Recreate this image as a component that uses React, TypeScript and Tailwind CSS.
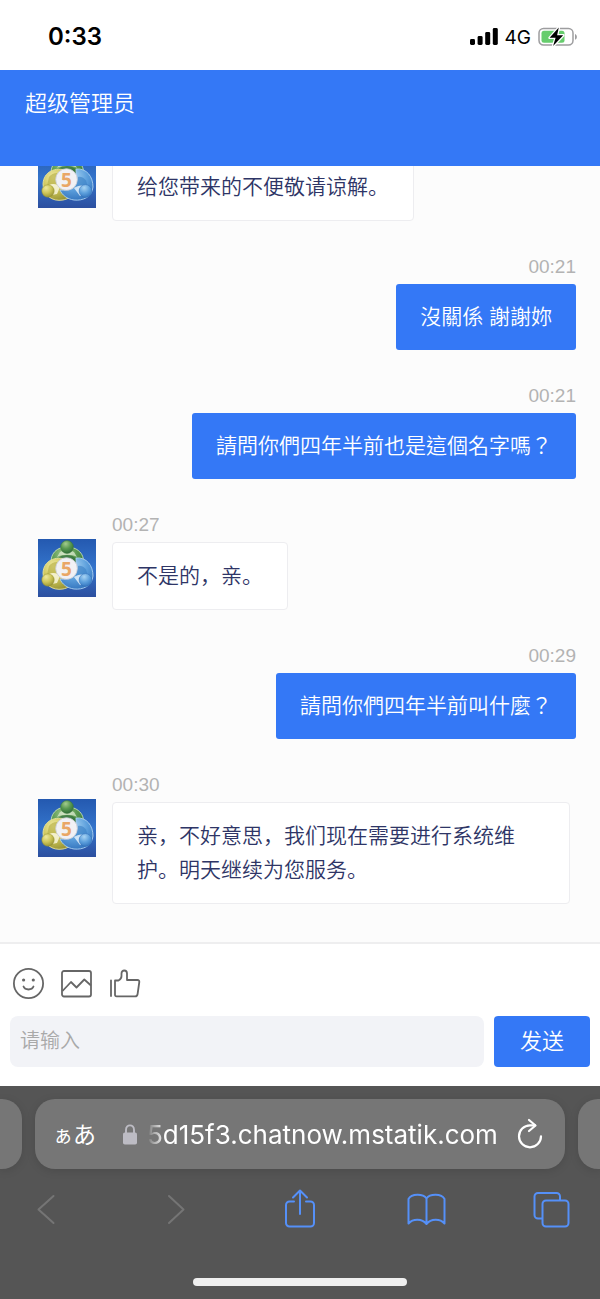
import React from "react";

type ChatMessage = {
  id: number;
  side: "in" | "out";
  time?: string;
  text: string;
};

const messages: ChatMessage[] = [
  { id: 1, side: "in", text: "给您带来的不便敬请谅解。" },
  { id: 2, side: "out", time: "00:21", text: "沒關係 謝謝妳" },
  { id: 3, side: "out", time: "00:21", text: "請問你們四年半前也是這個名字嗎？" },
  { id: 4, side: "in", time: "00:27", text: "不是的，亲。" },
  { id: 5, side: "out", time: "00:29", text: "請問你們四年半前叫什麼？" },
  { id: 6, side: "in", time: "00:30", text: "亲，不好意思，我们现在需要进行系统维护。明天继续为您服务。" },
];

function Avatar({ id }: { id: string }) {
  const bg = `bg-${id}`;
  const green = `green-${id}`;
  const yellow = `yellow-${id}`;
  const blue = `blue-${id}`;
  return (
    <svg viewBox="0 0 58 58" className="mt-[26px] size-[58px] shrink-0" aria-hidden="true">
      <defs>
        <linearGradient id={bg} x1="0" y1="0" x2="0" y2="1">
          <stop offset="0" stopColor="#2459b0" />
          <stop offset="0.5" stopColor="#3474cb" />
          <stop offset="1" stopColor="#2c4f9f" />
        </linearGradient>
        <radialGradient id={green} cx="0.4" cy="0.25" r="0.8">
          <stop offset="0" stopColor="#a3cb8d" />
          <stop offset="0.5" stopColor="#58984f" />
          <stop offset="1" stopColor="#2c6a38" />
        </radialGradient>
        <radialGradient id={yellow} cx="0.35" cy="0.25" r="0.85">
          <stop offset="0" stopColor="#efe99f" />
          <stop offset="0.5" stopColor="#cdc558" />
          <stop offset="1" stopColor="#8f8c30" />
        </radialGradient>
        <radialGradient id={blue} cx="0.4" cy="0.25" r="0.85">
          <stop offset="0" stopColor="#a9d4f3" />
          <stop offset="0.5" stopColor="#5c9fdc" />
          <stop offset="1" stopColor="#2c6cb8" />
        </radialGradient>
      </defs>
      <rect width="58" height="58" fill={`url(#${bg})`} />
      <path d="M14.500 30C10 17 17 8 29 8s20 9 15 22l-8 5H21z" fill={`url(#${green})`} stroke="#c6dfb5" strokeWidth="0.9" />
      <path d="M22 13c4-2.500 10-2.500 14 0l3 5c-5-3-15-3-20 0z" fill="#dcead2" opacity="0.75" />
      <path d="M19 28c-2-9 3-12 10-12s12 4 10 12z" fill="#2f6d3a" opacity="0.75" />
      <path d="M30 21C17 16 5.500 22 5 34c0 11 9 18 20 16 5-1 8-3 9-7z" fill={`url(#${yellow})`} stroke="#e9e39b" strokeWidth="0.9" />
      <path d="M11 27c3-4 8-5 13-3l-4 11c-4-2-8-1-11 1z" fill="#b2ac42" opacity="0.6" />
      <path d="M11 35c4-2 8-1 11 2l-3 7-5 1z" fill="#f8f6dc" opacity="0.85" />
      <path d="M38 19c11-1 17 8 17 18-1 10-10 14-19 13-7-1-12-5-14-10 9 1 17-4 16-21z" fill={`url(#${blue})`} stroke="#add3f2" strokeWidth="0.9" />
      <path d="M40 27c5-1 9 3 9 8l-12 4z" fill="#3e82c6" opacity="0.65" />
      <path d="M36 38c3-2 7-3 11-2l-1 8-4 2z" fill="#e4f1fb" opacity="0.85" />
      <circle cx="29" cy="8" r="6.400" fill={`url(#${green})`} stroke="#397536" strokeWidth="0.5" />
      <circle cx="10" cy="41" r="6.200" fill={`url(#${yellow})`} stroke="#96932f" strokeWidth="0.5" />
      <circle cx="47.500" cy="41" r="6.400" fill={`url(#${blue})`} stroke="#2f6db6" strokeWidth="0.5" />
      <circle cx="28.500" cy="29.500" r="10.800" fill="#f1f1f4" stroke="#c9ccd4" strokeWidth="0.8" />
      <text x="28.500" y="36.500" textAnchor="middle" fontFamily="Open Sans, sans-serif" fontWeight="700" fontSize="19" fill="#e9a765">
        5
      </text>
    </svg>
  );
}

function Message({ message }: { message: ChatMessage }) {
  const time = <time className="block h-6 text-[19px] leading-6 text-[#b3b3b3]">{message.time}</time>;
  if (message.side === "out") {
    return (
      <li className="flex flex-col items-end gap-[5px] pl-[112px] font-['Liberation_Sans','Noto_Sans_CJK_TC',sans-serif]">
        {time}
        <p lang="zh-TW" className="rounded-[3px] bg-[#3478f6] px-6 py-4 text-[21px] leading-[34px] font-[350] text-white">
          {message.text}
        </p>
      </li>
    );
  }
  return (
    <li className="flex items-start gap-4 pr-[6px] pl-[38px]">
      <Avatar id={String(message.id)} />
      <div className="flex min-w-0 flex-col items-start gap-[5px]">
        {time}
        <p lang="zh-CN" className="rounded-[4px] border border-[#ededf0] bg-white px-6 py-4 text-[21px] leading-[34px] font-[350] text-[#2e3566]">
          {message.text}
        </p>
      </div>
    </li>
  );
}

function StatusBar() {
  return (
    <div className="flex h-[70px] shrink-0 items-center justify-between bg-white pt-1 pr-[22px] pl-12 font-['Inter',sans-serif] text-black">
      <span className="text-2xl font-semibold">0:33</span>
      <div className="flex items-center gap-[7px]">
        <svg viewBox="0 0 28 18" className="h-[18px] w-7" aria-hidden="true">
          <rect x="0" y="11" width="5" height="6" rx="1.400" />
          <rect x="7.600" y="8" width="5" height="9" rx="1.400" />
          <rect x="15.200" y="4" width="5" height="13" rx="1.400" />
          <rect x="22.800" y="0" width="5" height="17" rx="1.400" />
        </svg>
        <span className="pt-px text-[19px] leading-6">4G</span>
        <svg viewBox="0 0 40 22" className="h-[22px] w-10" aria-hidden="true">
          <rect x="1" y="2.500" width="34" height="16.500" rx="4.500" fill="#fff" stroke="#9d9d9f" strokeWidth="1.500" />
          <rect x="3.500" y="4.800" width="23" height="12" rx="2.500" fill="#66cd6d" />
          <path d="M37 8c2.500.8 2.500 5 0 5.800z" fill="#9d9d9f" />
          <path d="M20.800 1.500L11.600 11.800h6l-2.500 8.200L25.200 9.300h-6.100z" fill="#000" stroke="#fff" strokeWidth="2.600" paintOrder="stroke" strokeLinejoin="round" />
        </svg>
      </div>
    </div>
  );
}

function Composer() {
  return (
    <form className="shrink-0 border-t-2 border-[#eeeeef] bg-white px-[10px] pt-6 pb-[19px]" onSubmit={(e) => e.preventDefault()}>
      <div className="flex gap-4 px-[3px] text-[#666]">
        <button type="button" aria-label="表情" className="size-8">
          <svg viewBox="0 0 32 32" className="size-8" fill="none" stroke="currentColor" strokeWidth="1.800" strokeLinecap="round">
            <circle cx="15.500" cy="15.500" r="14.600" />
            <path d="M10.500 18.500c1.500 4 8.500 4 10 0" />
            <circle cx="10.600" cy="12" r="1.600" fill="currentColor" stroke="none" />
            <circle cx="20.300" cy="12" r="1.600" fill="currentColor" stroke="none" />
          </svg>
        </button>
        <button type="button" aria-label="图片" className="size-8">
          <svg viewBox="0 0 32 32" className="size-8" fill="none" stroke="currentColor" strokeWidth="1.800" strokeLinejoin="round">
            <rect x="1" y="3" width="29" height="25.500" rx="2" />
            <path d="M1.500 23l8.500-9 5.500 5.500 7.800-8L30 17.500" />
          </svg>
        </button>
        <button type="button" aria-label="点赞" className="size-8">
          <svg viewBox="0 0 32 32" className="size-8" fill="none" stroke="currentColor" strokeWidth="1.800" strokeLinecap="round" strokeLinejoin="round">
            <path d="M2 12.500V28" />
            <path d="M6 12.500h3.500c2-1 3-2.500 3-4.500V5.500c0-4 5.500-4 5.500 0V12h10.500c1.300 0 2 .8 1.800 2L28.600 26c-.2 1.500-1 2.300-2.400 2.300H7.500c-1 0-1.500-.5-1.500-1.500z" />
          </svg>
        </button>
      </div>
      <div className="mt-4 flex gap-[10px]">
        <input
          type="text"
          aria-label="请输入"
          placeholder="请输入"
          className="h-[51px] min-w-0 flex-1 rounded-lg bg-[#f2f3f7] px-[10px] text-[20px] font-[350] outline-none placeholder:text-[#a9a9a9]"
        />
        <button type="submit" className="h-[51px] w-24 rounded-[4px] bg-[#3478f6] text-[22px] font-[350] text-white">
          发送
        </button>
      </div>
    </form>
  );
}

function BrowserBar() {
  return (
    <div className="shrink-0 bg-[#555] pt-[13px] pb-[13px]">
      <div className="flex h-[70px] gap-[13px]">
        <div className="w-[22px] rounded-r-[20px] bg-[#767676] shadow-[0_2px_10px_rgba(0,0,0,0.12)]" />
        <div className="flex min-w-0 flex-1 items-center rounded-[20px] bg-[#767676] pr-[21px] pl-[18px] text-white shadow-[0_2px_10px_rgba(0,0,0,0.12)]">
          <button type="button" className="shrink-0 font-['Noto_Sans_CJK_JP',sans-serif] text-[23px] leading-8" lang="ja">
            <span className="text-[20px]">ぁ</span>あ
          </button>
          <svg viewBox="0 0 14 21" className="ml-[27px] h-[21px] w-[14px] shrink-0" aria-hidden="true">
            <path d="M3 10V6c0-6.200 8-6.200 8 0v4" fill="none" stroke="#bdbcc4" strokeWidth="1.900" />
            <rect x="0" y="8.500" width="14" height="12" rx="1.800" fill="#bdbcc4" />
          </svg>
          <span className="ml-[10px] min-w-0 flex-1 overflow-hidden pt-px font-['Inter',sans-serif] text-[26px] leading-8 whitespace-nowrap [mask-image:linear-gradient(to_right,transparent,black_18px)]">
            5d15f3.chatnow.mstatik.com
          </span>
          <button type="button" aria-label="重新加载" className="shrink-0">
            <svg viewBox="0 0 28 32" className="h-8 w-7" fill="none" stroke="currentColor" strokeWidth="2.200" strokeLinecap="round" strokeLinejoin="round">
              <path d="M25 18.300A11 11 0 1 1 14 7.300h5" />
              <path d="M13 2l6.500 5.500L13 13" />
            </svg>
          </button>
        </div>
        <div className="w-[22px] rounded-l-[20px] bg-[#767676] shadow-[0_2px_10px_rgba(0,0,0,0.12)]" />
      </div>
      <nav className="mt-5 flex justify-between pr-7 pl-[26px] text-[#5590f8]">
        <button type="button" aria-label="后退" className="flex size-10 items-center justify-center text-[#757575]">
          <svg viewBox="0 0 24 40" className="h-10 w-6" fill="none" stroke="currentColor" strokeWidth="2" strokeLinecap="round" strokeLinejoin="round">
            <path d="M19.500 7L4.500 20.500l15 13.500" />
          </svg>
        </button>
        <button type="button" aria-label="前进" className="flex size-10 items-center justify-center text-[#757575]">
          <svg viewBox="0 0 24 40" className="h-10 w-6" fill="none" stroke="currentColor" strokeWidth="2" strokeLinecap="round" strokeLinejoin="round">
            <path d="M8 7l14.500 13.500L8 34" />
          </svg>
        </button>
        <button type="button" aria-label="分享" className="size-10">
          <svg viewBox="0 0 40 40" className="size-10" fill="none" stroke="currentColor" strokeWidth="2" strokeLinecap="round" strokeLinejoin="round">
            <path d="M15 12.500h-4.500A3.500 3.500 0 0 0 7 16v18a3.500 3.500 0 0 0 3.500 3.500h21A3.500 3.500 0 0 0 35 34V16a3.500 3.500 0 0 0-3.500-3.500H27" />
            <path d="M21 25V2M14 8.500L21 1.500l7 7" />
          </svg>
        </button>
        <button type="button" aria-label="书签" className="size-10">
          <svg viewBox="0 0 40 40" className="size-10" fill="none" stroke="currentColor" strokeWidth="2" strokeLinejoin="round">
            <path d="M20.500 9.500c-3.500-5-15-5-18 .5v24.500c4.500-5 13.500-5 18 .5 4.500-5.500 13.500-5.500 18-.5V10c-3-5.500-14.500-5.500-18-.5zM20.500 9.500V35" />
          </svg>
        </button>
        <button type="button" aria-label="标签页" className="size-10">
          <svg viewBox="0 0 40 40" className="size-10" fill="none" stroke="currentColor" strokeWidth="2" strokeLinejoin="round">
            <path d="M10.500 29.500H6A3.500 3.500 0 0 1 2.500 26V7.500A3.500 3.500 0 0 1 6 4h18.500A3.500 3.500 0 0 1 28 7.500V11" />
            <rect x="10.500" y="11.500" width="26" height="26" rx="3.500" />
          </svg>
        </button>
      </nav>
      <div className="mx-auto mt-[49px] h-2 w-[214px] rounded-full bg-[#efefef]" />
    </div>
  );
}

export default function App() {
  return (
    <div className="flex h-screen flex-col overflow-hidden bg-white font-['Liberation_Sans','Noto_Sans_CJK_SC',sans-serif]" lang="zh-CN">
      <StatusBar />
      <header className="h-24 shrink-0 bg-[#3478f6] px-[25px] pt-[18px]">
        <h1 className="text-[22px] leading-8 font-[350] text-white">超级管理员</h1>
      </header>
      <main className="flex min-h-0 flex-1 flex-col justify-end overflow-hidden bg-[#fcfcfc]">
        <ul className="flex flex-col gap-[34px] pr-6 pb-[38px]">
          {messages.map((message) => (
            <Message key={message.id} message={message} />
          ))}
        </ul>
      </main>
      <Composer />
      <BrowserBar />
    </div>
  );
}
